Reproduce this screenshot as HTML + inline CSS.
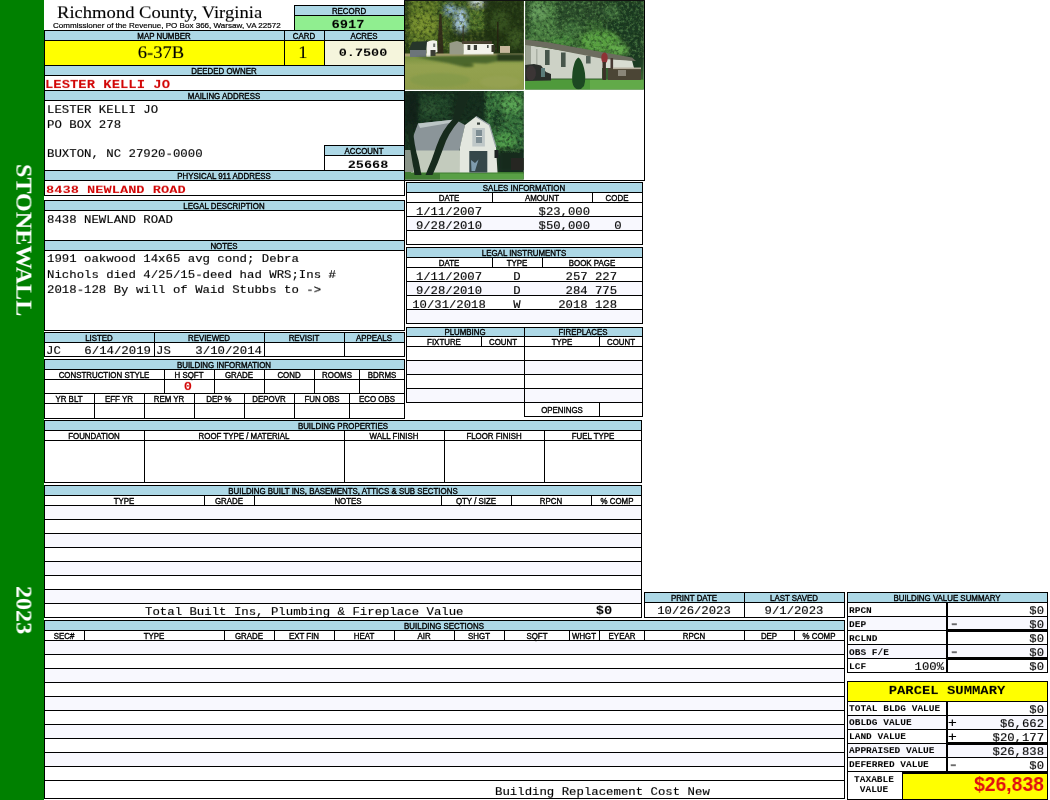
<!DOCTYPE html>
<html lang="en"><head><meta charset="utf-8"><title>Richmond County, Virginia - Property Record 6917</title><style>
html,body{margin:0;padding:0;background:#fff;}
body{width:1050px;height:800px;overflow:hidden;position:relative;}
#pg{position:absolute;left:0;top:0;width:1050px;height:800px;overflow:hidden;background:#fff;}
.f,.l,.t{position:absolute;}
.t{line-height:1;white-space:pre;color:#000;will-change:transform;}
.s{font-family:"Liberation Sans",Arial,sans-serif;-webkit-text-stroke:0.35px #000;}
.m{font-family:"Liberation Mono","Courier New",monospace;-webkit-text-stroke:0.15px currentColor;}
.r{font-family:"Liberation Serif","Times New Roman",serif;}
svg{position:absolute;display:block;}
</style></head><body><div id="pg">
<div class="f" style="left:0px;top:0px;width:44px;height:800px;background:#008000"></div>
<div class="t r" style="left:11.6px;top:164.4px;font-size:23.4px;color:#fff;font-weight:bold;transform-origin:0 100%;transform:translateY(-23.4px) rotate(90deg) scaleX(1.03);" id="sw">STONEWALL</div>
<div class="t r" style="left:11.8px;top:586.2px;font-size:23.4px;color:#fff;font-weight:bold;transform-origin:0 100%;transform:translateY(-23.4px) rotate(90deg) scaleX(1.03);" id="yr">2023</div>
<div class="t r" style="top:2.72px;font-size:18.6px;left:57.00px;transform:scale(1,0.9);transform-origin:left 15.58px;-webkit-text-stroke:0.12px #000;">Richmond County, Virginia</div>
<div class="t s" style="top:21.69px;font-size:8.05px;left:52.60px;-webkit-text-stroke:0.2px #000;">Commissioner of the Revenue, PO Box 366, Warsaw, VA 22572</div>
<div class="f" style="left:295px;top:6px;width:109px;height:9px;background:#add8e6"></div>
<div class="f" style="left:295px;top:16px;width:109px;height:14px;background:#90ee90"></div>
<div class="l" style="left:294px;top:5px;width:111px;height:1px;background:#000"></div>
<div class="l" style="left:294px;top:30px;width:111px;height:1px;background:#000"></div>
<div class="l" style="left:294px;top:5px;width:1px;height:26px;background:#000"></div>
<div class="l" style="left:404px;top:5px;width:1px;height:26px;background:#000"></div>
<div class="l" style="left:294px;top:15px;width:111px;height:1px;background:#000"></div>
<div class="t s" style="top:8.21px;font-size:7.9px;left:49.00px;width:600px;text-align:center;transform:scale(1,1.06);transform-origin:center 6.69px;">RECORD</div>
<div class="t m" style="top:17.62px;font-size:13.8px;left:48.40px;width:600px;text-align:center;font-weight:bold;transform:scale(1,0.83);transform-origin:center 10.58px;-webkit-text-stroke:0;">6917</div>
<div class="f" style="left:45px;top:31px;width:359px;height:9px;background:#add8e6"></div>
<div class="f" style="left:45px;top:41px;width:279px;height:24px;background:#ffff00"></div>
<div class="f" style="left:325px;top:41px;width:79px;height:24px;background:#f5f5dc"></div>
<div class="l" style="left:44px;top:30px;width:361px;height:1px;background:#000"></div>
<div class="l" style="left:44px;top:65px;width:361px;height:1px;background:#000"></div>
<div class="l" style="left:44px;top:30px;width:1px;height:36px;background:#000"></div>
<div class="l" style="left:404px;top:30px;width:1px;height:36px;background:#000"></div>
<div class="l" style="left:44px;top:40px;width:361px;height:1px;background:#000"></div>
<div class="l" style="left:284px;top:30px;width:1px;height:36px;background:#000"></div>
<div class="l" style="left:324px;top:30px;width:1px;height:36px;background:#000"></div>
<div class="t s" style="top:32.81px;font-size:7.9px;left:-136.00px;width:600px;text-align:center;transform:scale(1,1.06);transform-origin:center 6.69px;">MAP NUMBER</div>
<div class="t s" style="top:32.81px;font-size:7.9px;left:4.00px;width:600px;text-align:center;transform:scale(1,1.06);transform-origin:center 6.69px;">CARD</div>
<div class="t s" style="top:32.81px;font-size:7.9px;left:64.00px;width:600px;text-align:center;transform:scale(1,1.06);transform-origin:center 6.69px;">ACRES</div>
<div class="t r" style="top:42.62px;font-size:18.6px;left:-139.30px;width:600px;text-align:center;transform:scale(1,0.9);transform-origin:center 15.58px;-webkit-text-stroke:0.12px #000;">6-37B</div>
<div class="t r" style="top:42.62px;font-size:18.6px;left:2.60px;width:600px;text-align:center;transform:scale(1,0.9);transform-origin:center 15.58px;-webkit-text-stroke:0.12px #000;">1</div>
<div class="t m" style="top:46.05px;font-size:13.5px;left:62.50px;width:600px;text-align:center;font-weight:bold;transform:scale(1,0.83);transform-origin:center 10.35px;-webkit-text-stroke:0;">0.7500</div>
<div class="f" style="left:45px;top:66px;width:359px;height:9px;background:#add8e6"></div>
<div class="l" style="left:44px;top:65px;width:1px;height:131px;background:#000"></div>
<div class="l" style="left:404px;top:0px;width:1px;height:196px;background:#000"></div>
<div class="l" style="left:44px;top:75px;width:361px;height:1px;background:#000"></div>
<div class="l" style="left:44px;top:90px;width:361px;height:1px;background:#000"></div>
<div class="t s" style="top:67.91px;font-size:7.9px;left:-76.00px;width:600px;text-align:center;transform:scale(1,1.06);transform-origin:center 6.69px;">DEEDED OWNER</div>
<div class="t m" style="top:78.15px;font-size:13.9px;left:45.30px;font-weight:bold;color:#d20606;transform:scale(1,0.83);transform-origin:left 10.65px;-webkit-text-stroke:0;">LESTER KELLI JO</div>
<div class="f" style="left:45px;top:91px;width:359px;height:9px;background:#add8e6"></div>
<div class="l" style="left:44px;top:100px;width:361px;height:1px;background:#000"></div>
<div class="t s" style="top:92.91px;font-size:7.9px;left:-76.00px;width:600px;text-align:center;transform:scale(1,1.06);transform-origin:center 6.69px;">MAILING ADDRESS</div>
<div class="t m" style="top:103.53px;font-size:12.35px;left:47.00px;transform:scale(1,0.875);transform-origin:left 9.47px;">LESTER KELLI JO</div>
<div class="t m" style="top:118.73px;font-size:12.35px;left:47.00px;transform:scale(1,0.875);transform-origin:left 9.47px;">PO BOX 278</div>
<div class="t m" style="top:148.43px;font-size:12.35px;left:46.60px;transform:scale(1,0.875);transform-origin:left 9.47px;">BUXTON, NC 27920-0000</div>
<div class="f" style="left:325px;top:146px;width:79px;height:9px;background:#add8e6"></div>
<div class="l" style="left:324px;top:145px;width:81px;height:1px;background:#000"></div>
<div class="l" style="left:324px;top:145px;width:1px;height:26px;background:#000"></div>
<div class="l" style="left:324px;top:155px;width:81px;height:1px;background:#000"></div>
<div class="t s" style="top:148.21px;font-size:7.9px;left:64.00px;width:600px;text-align:center;transform:scale(1,1.06);transform-origin:center 6.69px;">ACCOUNT</div>
<div class="t m" style="top:158.05px;font-size:13.5px;left:67.80px;width:600px;text-align:center;font-weight:bold;transform:scale(1,0.83);transform-origin:center 10.35px;-webkit-text-stroke:0;">25668</div>
<div class="f" style="left:45px;top:171px;width:359px;height:9px;background:#add8e6"></div>
<div class="l" style="left:44px;top:170px;width:361px;height:1px;background:#000"></div>
<div class="l" style="left:44px;top:180px;width:361px;height:1px;background:#000"></div>
<div class="l" style="left:44px;top:195px;width:361px;height:1px;background:#000"></div>
<div class="t s" style="top:172.91px;font-size:7.9px;left:-76.00px;width:600px;text-align:center;transform:scale(1,1.06);transform-origin:center 6.69px;">PHYSICAL 911 ADDRESS</div>
<div class="t m" style="top:182.50px;font-size:13.7px;left:46.30px;font-weight:bold;color:#d20606;transform:scale(1,0.83);transform-origin:left 10.50px;-webkit-text-stroke:0;">8438 NEWLAND ROAD</div>
<div class="f" style="left:45px;top:201px;width:359px;height:9px;background:#add8e6"></div>
<div class="l" style="left:44px;top:200px;width:361px;height:1px;background:#000"></div>
<div class="l" style="left:44px;top:240px;width:361px;height:1px;background:#000"></div>
<div class="l" style="left:44px;top:200px;width:1px;height:41px;background:#000"></div>
<div class="l" style="left:404px;top:200px;width:1px;height:41px;background:#000"></div>
<div class="l" style="left:44px;top:210px;width:361px;height:1px;background:#000"></div>
<div class="t s" style="top:203.01px;font-size:7.9px;left:-76.00px;width:600px;text-align:center;transform:scale(1,1.06);transform-origin:center 6.69px;">LEGAL DESCRIPTION</div>
<div class="t m" style="top:213.73px;font-size:12.35px;left:47.00px;transform:scale(1,0.875);transform-origin:left 9.47px;">8438 NEWLAND ROAD</div>
<div class="f" style="left:45px;top:241px;width:359px;height:9px;background:#add8e6"></div>
<div class="l" style="left:44px;top:240px;width:361px;height:1px;background:#000"></div>
<div class="l" style="left:44px;top:330px;width:361px;height:1px;background:#000"></div>
<div class="l" style="left:44px;top:240px;width:1px;height:91px;background:#000"></div>
<div class="l" style="left:404px;top:240px;width:1px;height:91px;background:#000"></div>
<div class="l" style="left:44px;top:250px;width:361px;height:1px;background:#000"></div>
<div class="t s" style="top:243.01px;font-size:7.9px;left:-76.00px;width:600px;text-align:center;transform:scale(1,1.06);transform-origin:center 6.69px;">NOTES</div>
<div class="t m" style="top:253.33px;font-size:12.35px;left:46.80px;transform:scale(1,0.875);transform-origin:left 9.47px;">1991 oakwood 14x65 avg cond; Debra</div>
<div class="t m" style="top:269.13px;font-size:12.35px;left:46.80px;transform:scale(1,0.875);transform-origin:left 9.47px;">Nichols died 4/25/15-deed had WRS;Ins #</div>
<div class="t m" style="top:284.13px;font-size:12.35px;left:46.80px;transform:scale(1,0.875);transform-origin:left 9.47px;">2018-128 By will of Waid Stubbs to -&gt;</div>
<div class="f" style="left:45px;top:333px;width:359px;height:9px;background:#add8e6"></div>
<div class="l" style="left:44px;top:332px;width:361px;height:1px;background:#000"></div>
<div class="l" style="left:44px;top:356px;width:361px;height:1px;background:#000"></div>
<div class="l" style="left:44px;top:332px;width:1px;height:25px;background:#000"></div>
<div class="l" style="left:404px;top:332px;width:1px;height:25px;background:#000"></div>
<div class="l" style="left:44px;top:342px;width:361px;height:1px;background:#000"></div>
<div class="l" style="left:154px;top:332px;width:1px;height:25px;background:#000"></div>
<div class="l" style="left:264px;top:332px;width:1px;height:25px;background:#000"></div>
<div class="l" style="left:344px;top:332px;width:1px;height:25px;background:#000"></div>
<div class="t s" style="top:335.01px;font-size:7.9px;left:-201.00px;width:600px;text-align:center;transform:scale(1,1.06);transform-origin:center 6.69px;">LISTED</div>
<div class="t s" style="top:335.01px;font-size:7.9px;left:-91.00px;width:600px;text-align:center;transform:scale(1,1.06);transform-origin:center 6.69px;">REVIEWED</div>
<div class="t s" style="top:335.01px;font-size:7.9px;left:4.00px;width:600px;text-align:center;transform:scale(1,1.06);transform-origin:center 6.69px;">REVISIT</div>
<div class="t s" style="top:335.01px;font-size:7.9px;left:74.00px;width:600px;text-align:center;transform:scale(1,1.06);transform-origin:center 6.69px;">APPEALS</div>
<div class="t m" style="top:344.73px;font-size:12.35px;left:46.00px;transform:scale(1,0.875);transform-origin:left 9.47px;">JC</div>
<div class="t m" style="top:344.73px;font-size:12.35px;left:-448.60px;width:600px;text-align:right;transform:scale(1,0.875);transform-origin:right 9.47px;">6/14/2019</div>
<div class="t m" style="top:344.73px;font-size:12.35px;left:156.00px;transform:scale(1,0.875);transform-origin:left 9.47px;">JS</div>
<div class="t m" style="top:344.73px;font-size:12.35px;left:-338.40px;width:600px;text-align:right;transform:scale(1,0.875);transform-origin:right 9.47px;">3/10/2014</div>
<div class="f" style="left:45px;top:360px;width:359px;height:9px;background:#add8e6"></div>
<div class="l" style="left:44px;top:359px;width:361px;height:1px;background:#000"></div>
<div class="l" style="left:44px;top:418px;width:361px;height:1px;background:#000"></div>
<div class="l" style="left:44px;top:359px;width:1px;height:60px;background:#000"></div>
<div class="l" style="left:404px;top:359px;width:1px;height:60px;background:#000"></div>
<div class="l" style="left:44px;top:369px;width:361px;height:1px;background:#000"></div>
<div class="l" style="left:44px;top:379px;width:361px;height:1px;background:#000"></div>
<div class="l" style="left:44px;top:393px;width:361px;height:1px;background:#000"></div>
<div class="l" style="left:44px;top:403px;width:361px;height:1px;background:#000"></div>
<div class="l" style="left:164px;top:369px;width:1px;height:25px;background:#000"></div>
<div class="l" style="left:214px;top:369px;width:1px;height:25px;background:#000"></div>
<div class="l" style="left:264px;top:369px;width:1px;height:25px;background:#000"></div>
<div class="l" style="left:314px;top:369px;width:1px;height:25px;background:#000"></div>
<div class="l" style="left:359px;top:369px;width:1px;height:25px;background:#000"></div>
<div class="l" style="left:94px;top:393px;width:1px;height:26px;background:#000"></div>
<div class="l" style="left:144px;top:393px;width:1px;height:26px;background:#000"></div>
<div class="l" style="left:194px;top:393px;width:1px;height:26px;background:#000"></div>
<div class="l" style="left:244px;top:393px;width:1px;height:26px;background:#000"></div>
<div class="l" style="left:294px;top:393px;width:1px;height:26px;background:#000"></div>
<div class="l" style="left:349px;top:393px;width:1px;height:26px;background:#000"></div>
<div class="t s" style="top:362.01px;font-size:7.9px;left:-76.00px;width:600px;text-align:center;transform:scale(1,1.06);transform-origin:center 6.69px;">BUILDING INFORMATION</div>
<div class="t s" style="top:372.01px;font-size:7.9px;left:-196.00px;width:600px;text-align:center;transform:scale(1,1.06);transform-origin:center 6.69px;">CONSTRUCTION STYLE</div>
<div class="t s" style="top:372.01px;font-size:7.9px;left:-111.00px;width:600px;text-align:center;transform:scale(1,1.06);transform-origin:center 6.69px;">H SQFT</div>
<div class="t s" style="top:372.01px;font-size:7.9px;left:-61.00px;width:600px;text-align:center;transform:scale(1,1.06);transform-origin:center 6.69px;">GRADE</div>
<div class="t s" style="top:372.01px;font-size:7.9px;left:-11.00px;width:600px;text-align:center;transform:scale(1,1.06);transform-origin:center 6.69px;">COND</div>
<div class="t s" style="top:372.01px;font-size:7.9px;left:36.50px;width:600px;text-align:center;transform:scale(1,1.06);transform-origin:center 6.69px;">ROOMS</div>
<div class="t s" style="top:372.01px;font-size:7.9px;left:81.50px;width:600px;text-align:center;transform:scale(1,1.06);transform-origin:center 6.69px;">BDRMS</div>
<div class="t m" style="top:380.22px;font-size:13.8px;left:-112.00px;width:600px;text-align:center;font-weight:bold;color:#d20606;transform:scale(1,0.83);transform-origin:center 10.58px;-webkit-text-stroke:0;">0</div>
<div class="t s" style="top:396.01px;font-size:7.9px;left:-231.00px;width:600px;text-align:center;transform:scale(1,1.06);transform-origin:center 6.69px;">YR BLT</div>
<div class="t s" style="top:396.01px;font-size:7.9px;left:-181.00px;width:600px;text-align:center;transform:scale(1,1.06);transform-origin:center 6.69px;">EFF YR</div>
<div class="t s" style="top:396.01px;font-size:7.9px;left:-131.00px;width:600px;text-align:center;transform:scale(1,1.06);transform-origin:center 6.69px;">REM YR</div>
<div class="t s" style="top:396.01px;font-size:7.9px;left:-81.00px;width:600px;text-align:center;transform:scale(1,1.06);transform-origin:center 6.69px;">DEP %</div>
<div class="t s" style="top:396.01px;font-size:7.9px;left:-31.00px;width:600px;text-align:center;transform:scale(1,1.06);transform-origin:center 6.69px;">DEPOVR</div>
<div class="t s" style="top:396.01px;font-size:7.9px;left:21.50px;width:600px;text-align:center;transform:scale(1,1.06);transform-origin:center 6.69px;">FUN OBS</div>
<div class="t s" style="top:396.01px;font-size:7.9px;left:76.50px;width:600px;text-align:center;transform:scale(1,1.06);transform-origin:center 6.69px;">ECO OBS</div>
<div class="f" style="left:45px;top:421px;width:596px;height:9px;background:#add8e6"></div>
<div class="l" style="left:44px;top:420px;width:598px;height:1px;background:#000"></div>
<div class="l" style="left:44px;top:482px;width:598px;height:1px;background:#000"></div>
<div class="l" style="left:44px;top:420px;width:1px;height:63px;background:#000"></div>
<div class="l" style="left:641px;top:420px;width:1px;height:63px;background:#000"></div>
<div class="l" style="left:44px;top:430px;width:598px;height:1px;background:#000"></div>
<div class="l" style="left:44px;top:440px;width:598px;height:1px;background:#000"></div>
<div class="l" style="left:144px;top:430px;width:1px;height:53px;background:#000"></div>
<div class="l" style="left:344px;top:430px;width:1px;height:53px;background:#000"></div>
<div class="l" style="left:444px;top:430px;width:1px;height:53px;background:#000"></div>
<div class="l" style="left:544px;top:430px;width:1px;height:53px;background:#000"></div>
<div class="t s" style="top:423.01px;font-size:7.9px;left:43.00px;width:600px;text-align:center;transform:scale(1,1.06);transform-origin:center 6.69px;">BUILDING PROPERTIES</div>
<div class="t s" style="top:433.01px;font-size:7.9px;left:-206.00px;width:600px;text-align:center;transform:scale(1,1.06);transform-origin:center 6.69px;">FOUNDATION</div>
<div class="t s" style="top:433.01px;font-size:7.9px;left:-56.00px;width:600px;text-align:center;transform:scale(1,1.06);transform-origin:center 6.69px;">ROOF TYPE / MATERIAL</div>
<div class="t s" style="top:433.01px;font-size:7.9px;left:94.00px;width:600px;text-align:center;transform:scale(1,1.06);transform-origin:center 6.69px;">WALL FINISH</div>
<div class="t s" style="top:433.01px;font-size:7.9px;left:194.00px;width:600px;text-align:center;transform:scale(1,1.06);transform-origin:center 6.69px;">FLOOR FINISH</div>
<div class="t s" style="top:433.01px;font-size:7.9px;left:293.00px;width:600px;text-align:center;transform:scale(1,1.06);transform-origin:center 6.69px;">FUEL TYPE</div>
<div class="f" style="left:45px;top:486px;width:596px;height:9px;background:#add8e6"></div>
<div class="f" style="left:45px;top:506px;width:596px;height:13px;background:#f8f8fe"></div>
<div class="f" style="left:45px;top:534px;width:596px;height:13px;background:#f8f8fe"></div>
<div class="f" style="left:45px;top:562px;width:596px;height:13px;background:#f8f8fe"></div>
<div class="f" style="left:45px;top:590px;width:596px;height:13px;background:#f8f8fe"></div>
<div class="l" style="left:44px;top:485px;width:598px;height:1px;background:#000"></div>
<div class="l" style="left:44px;top:617px;width:598px;height:1px;background:#000"></div>
<div class="l" style="left:44px;top:485px;width:1px;height:133px;background:#000"></div>
<div class="l" style="left:641px;top:485px;width:1px;height:133px;background:#000"></div>
<div class="l" style="left:44px;top:495px;width:598px;height:1px;background:#000"></div>
<div class="l" style="left:44px;top:505px;width:598px;height:1px;background:#000"></div>
<div class="l" style="left:44px;top:519px;width:598px;height:1px;background:#000"></div>
<div class="l" style="left:44px;top:533px;width:598px;height:1px;background:#000"></div>
<div class="l" style="left:44px;top:547px;width:598px;height:1px;background:#000"></div>
<div class="l" style="left:44px;top:561px;width:598px;height:1px;background:#000"></div>
<div class="l" style="left:44px;top:575px;width:598px;height:1px;background:#000"></div>
<div class="l" style="left:44px;top:589px;width:598px;height:1px;background:#000"></div>
<div class="l" style="left:44px;top:603px;width:598px;height:1px;background:#000"></div>
<div class="l" style="left:204px;top:495px;width:1px;height:11px;background:#000"></div>
<div class="l" style="left:254px;top:495px;width:1px;height:11px;background:#000"></div>
<div class="l" style="left:441px;top:495px;width:1px;height:11px;background:#000"></div>
<div class="l" style="left:511px;top:495px;width:1px;height:11px;background:#000"></div>
<div class="l" style="left:591px;top:495px;width:1px;height:11px;background:#000"></div>
<div class="t s" style="top:488.01px;font-size:7.9px;left:43.00px;width:600px;text-align:center;transform:scale(1,1.06);transform-origin:center 6.69px;">BUILDING BUILT INS, BASEMENTS, ATTICS &amp; SUB SECTIONS</div>
<div class="t s" style="top:498.01px;font-size:7.9px;left:-176.00px;width:600px;text-align:center;transform:scale(1,1.06);transform-origin:center 6.69px;">TYPE</div>
<div class="t s" style="top:498.01px;font-size:7.9px;left:-71.00px;width:600px;text-align:center;transform:scale(1,1.06);transform-origin:center 6.69px;">GRADE</div>
<div class="t s" style="top:498.01px;font-size:7.9px;left:47.50px;width:600px;text-align:center;transform:scale(1,1.06);transform-origin:center 6.69px;">NOTES</div>
<div class="t s" style="top:498.01px;font-size:7.9px;left:176.00px;width:600px;text-align:center;transform:scale(1,1.06);transform-origin:center 6.69px;">QTY / SIZE</div>
<div class="t s" style="top:498.01px;font-size:7.9px;left:251.00px;width:600px;text-align:center;transform:scale(1,1.06);transform-origin:center 6.69px;">RPCN</div>
<div class="t s" style="top:498.01px;font-size:7.9px;left:316.50px;width:600px;text-align:center;transform:scale(1,1.06);transform-origin:center 6.69px;">% COMP</div>
<div class="t m" style="top:605.73px;font-size:12.35px;left:145.30px;transform:scale(1,0.875);transform-origin:left 9.47px;">Total Built Ins, Plumbing &amp; Fireplace Value</div>
<div class="t m" style="top:604.02px;font-size:13.8px;left:303.50px;width:600px;text-align:center;font-weight:bold;transform:scale(1,0.83);transform-origin:center 10.58px;-webkit-text-stroke:0;">$0</div>
<div class="f" style="left:45px;top:621px;width:799px;height:9px;background:#add8e6"></div>
<div class="f" style="left:45px;top:641px;width:799px;height:13px;background:#f8f8fe"></div>
<div class="f" style="left:45px;top:669px;width:799px;height:13px;background:#f8f8fe"></div>
<div class="f" style="left:45px;top:697px;width:799px;height:13px;background:#f8f8fe"></div>
<div class="f" style="left:45px;top:725px;width:799px;height:13px;background:#f8f8fe"></div>
<div class="f" style="left:45px;top:753px;width:799px;height:13px;background:#f8f8fe"></div>
<div class="l" style="left:44px;top:620px;width:801px;height:1px;background:#000"></div>
<div class="l" style="left:44px;top:798px;width:801px;height:1px;background:#000"></div>
<div class="l" style="left:44px;top:620px;width:1px;height:179px;background:#000"></div>
<div class="l" style="left:844px;top:620px;width:1px;height:179px;background:#000"></div>
<div class="l" style="left:44px;top:630px;width:801px;height:1px;background:#000"></div>
<div class="l" style="left:44px;top:640px;width:801px;height:1px;background:#000"></div>
<div class="l" style="left:44px;top:654px;width:801px;height:1px;background:#000"></div>
<div class="l" style="left:44px;top:668px;width:801px;height:1px;background:#000"></div>
<div class="l" style="left:44px;top:682px;width:801px;height:1px;background:#000"></div>
<div class="l" style="left:44px;top:696px;width:801px;height:1px;background:#000"></div>
<div class="l" style="left:44px;top:710px;width:801px;height:1px;background:#000"></div>
<div class="l" style="left:44px;top:724px;width:801px;height:1px;background:#000"></div>
<div class="l" style="left:44px;top:738px;width:801px;height:1px;background:#000"></div>
<div class="l" style="left:44px;top:752px;width:801px;height:1px;background:#000"></div>
<div class="l" style="left:44px;top:766px;width:801px;height:1px;background:#000"></div>
<div class="l" style="left:44px;top:780px;width:801px;height:1px;background:#000"></div>
<div class="l" style="left:84px;top:630px;width:1px;height:11px;background:#000"></div>
<div class="l" style="left:224px;top:630px;width:1px;height:11px;background:#000"></div>
<div class="l" style="left:274px;top:630px;width:1px;height:11px;background:#000"></div>
<div class="l" style="left:334px;top:630px;width:1px;height:11px;background:#000"></div>
<div class="l" style="left:394px;top:630px;width:1px;height:11px;background:#000"></div>
<div class="l" style="left:454px;top:630px;width:1px;height:11px;background:#000"></div>
<div class="l" style="left:504px;top:630px;width:1px;height:11px;background:#000"></div>
<div class="l" style="left:569px;top:630px;width:1px;height:11px;background:#000"></div>
<div class="l" style="left:599px;top:630px;width:1px;height:11px;background:#000"></div>
<div class="l" style="left:644px;top:630px;width:1px;height:11px;background:#000"></div>
<div class="l" style="left:744px;top:630px;width:1px;height:11px;background:#000"></div>
<div class="l" style="left:794px;top:630px;width:1px;height:11px;background:#000"></div>
<div class="t s" style="top:623.01px;font-size:7.9px;left:144.00px;width:600px;text-align:center;transform:scale(1,1.06);transform-origin:center 6.69px;">BUILDING SECTIONS</div>
<div class="t s" style="top:633.01px;font-size:7.9px;left:-236.00px;width:600px;text-align:center;transform:scale(1,1.06);transform-origin:center 6.69px;">SEC#</div>
<div class="t s" style="top:633.01px;font-size:7.9px;left:-146.00px;width:600px;text-align:center;transform:scale(1,1.06);transform-origin:center 6.69px;">TYPE</div>
<div class="t s" style="top:633.01px;font-size:7.9px;left:-51.00px;width:600px;text-align:center;transform:scale(1,1.06);transform-origin:center 6.69px;">GRADE</div>
<div class="t s" style="top:633.01px;font-size:7.9px;left:4.00px;width:600px;text-align:center;transform:scale(1,1.06);transform-origin:center 6.69px;">EXT FIN</div>
<div class="t s" style="top:633.01px;font-size:7.9px;left:64.00px;width:600px;text-align:center;transform:scale(1,1.06);transform-origin:center 6.69px;">HEAT</div>
<div class="t s" style="top:633.01px;font-size:7.9px;left:124.00px;width:600px;text-align:center;transform:scale(1,1.06);transform-origin:center 6.69px;">AIR</div>
<div class="t s" style="top:633.01px;font-size:7.9px;left:179.00px;width:600px;text-align:center;transform:scale(1,1.06);transform-origin:center 6.69px;">SHGT</div>
<div class="t s" style="top:633.01px;font-size:7.9px;left:236.50px;width:600px;text-align:center;transform:scale(1,1.06);transform-origin:center 6.69px;">SQFT</div>
<div class="t s" style="top:633.01px;font-size:7.9px;left:284.00px;width:600px;text-align:center;transform:scale(1,1.06);transform-origin:center 6.69px;">WHGT</div>
<div class="t s" style="top:633.01px;font-size:7.9px;left:321.50px;width:600px;text-align:center;transform:scale(1,1.06);transform-origin:center 6.69px;">EYEAR</div>
<div class="t s" style="top:633.01px;font-size:7.9px;left:394.00px;width:600px;text-align:center;transform:scale(1,1.06);transform-origin:center 6.69px;">RPCN</div>
<div class="t s" style="top:633.01px;font-size:7.9px;left:469.00px;width:600px;text-align:center;transform:scale(1,1.06);transform-origin:center 6.69px;">DEP</div>
<div class="t s" style="top:633.01px;font-size:7.9px;left:519.00px;width:600px;text-align:center;transform:scale(1,1.06);transform-origin:center 6.69px;">% COMP</div>
<div class="t m" style="top:785.73px;font-size:12.35px;left:495.20px;transform:scale(1,0.875);transform-origin:left 9.47px;">Building Replacement Cost New</div>
<svg style="left:405px;top:0px" width="239" height="180" viewBox="405 0 239 180">
<defs>
<filter id="b1" x="-5%" y="-5%" width="110%" height="110%"><feGaussianBlur stdDeviation="0.7"/></filter>
<filter id="b2" x="-20%" y="-20%" width="140%" height="140%"><feGaussianBlur stdDeviation="2.2"/></filter>
<filter id="b3" x="-20%" y="-20%" width="140%" height="140%"><feGaussianBlur stdDeviation="1.2"/></filter>
<filter id="leaf" x="0" y="0" width="100%" height="100%">
<feTurbulence type="fractalNoise" baseFrequency="0.3" numOctaves="3" seed="7" result="n"/>
<feColorMatrix in="n" type="matrix" values="0 0 0 0 0  0 0 0 0 0  0 0 0 0 0  2.6 0 0 0 -1.1" result="a"/>
<feComposite in="SourceGraphic" in2="a" operator="in"/>
</filter>
<filter id="leaf2" x="0" y="0" width="100%" height="100%">
<feTurbulence type="fractalNoise" baseFrequency="0.34" numOctaves="3" seed="23" result="n"/>
<feColorMatrix in="n" type="matrix" values="0 0 0 0 0  0 0 0 0 0  0 0 0 0 0  0 2.8 0 0 -1.25" result="a"/>
<feComposite in="SourceGraphic" in2="a" operator="in"/>
</filter>
<clipPath id="c1"><rect x="405" y="1" width="118.8" height="88.4"/></clipPath>
<clipPath id="c2"><rect x="525.2" y="1" width="118.6" height="88.4"/></clipPath>
<clipPath id="c3"><rect x="405" y="91.1" width="118.7" height="88.5"/></clipPath>
<linearGradient id="lawn1" x1="0" y1="0" x2="0" y2="1"><stop offset="0" stop-color="#76903e"/><stop offset="0.3" stop-color="#94a250"/><stop offset="1" stop-color="#8e9c4a"/></linearGradient>
</defs>
<g clip-path="url(#c1)">
<rect x="405" y="0" width="119" height="90" fill="#36501e"/>
<g filter="url(#b2)">
<rect x="405" y="0" width="32" height="44" fill="#5a7626"/>
<rect x="405" y="0" width="5" height="60" fill="#2c4018"/>
<ellipse cx="424" cy="24" rx="14" ry="12" fill="#748e2e"/>
<rect x="438" y="0" width="30" height="45" fill="#405e26"/>
<ellipse cx="461" cy="22" rx="6" ry="13" fill="#a9c9e6"/>
<ellipse cx="450" cy="10" rx="5" ry="5" fill="#8fb4d8"/>
<ellipse cx="477" cy="3" rx="7" ry="3.5" fill="#dfeaf6"/>
<rect x="466" y="8" width="18" height="36" fill="#4a6c2a"/>
<rect x="484" y="0" width="40" height="56" fill="#263a18"/>
<ellipse cx="500" cy="22" rx="9" ry="12" fill="#3f5e26"/>
<ellipse cx="515" cy="38" rx="7" ry="9" fill="#4a6a2c"/>
<rect x="452" y="32" width="36" height="10" fill="#2a401c"/>
</g>
<rect x="405" y="0" width="119" height="56" fill="#1c2c10" filter="url(#leaf)" opacity="0.75"/>
<rect x="405" y="0" width="80" height="50" fill="#8ea43e" filter="url(#leaf2)" opacity="0.5"/>
<rect x="485" y="0" width="39" height="50" fill="#5a7a36" filter="url(#leaf2)" opacity="0.4"/>
<rect x="484" y="0" width="40" height="56" fill="#1a2a10" opacity="0.3"/>
<rect x="444" y="30" width="60" height="12" fill="#1a2a10" opacity="0.35" filter="url(#b3)"/>
<g filter="url(#b1)">
<path d="M439.4 14 L441.4 14 L443.5 54 L437.4 54 Z" fill="#2e2416" opacity="0.85"/>
<rect x="462.5" y="26" width="1.3" height="16" fill="#33301e" opacity="0.8"/>
<rect x="497" y="22" width="1.6" height="30" fill="#241f14" opacity="0.8"/>
<rect x="405" y="55" width="119" height="35" fill="url(#lawn1)"/>
<rect x="405" y="53.5" width="119" height="3" fill="#a8a070"/>
<path d="M412 42 L428 41 L426 50 L409 50 Z" fill="#28362c"/>
<rect x="410" y="50" width="16" height="7" fill="#6c747a"/>
<path d="M427 42 Q432 39 437 41 L437.5 52 L434 53 L430 57 L426.5 57 L426.5 48 Z" fill="#f2f2ea"/>
<rect x="430.5" y="50" width="5" height="6" fill="#3a3c34"/>
<rect x="433.2" y="43.5" width="2" height="3.5" fill="#6a7068"/>
<path d="M449.5 43 L457 41 L463.5 43 L463.5 54.5 L449.5 54.5 Z" fill="#979a88"/>
<rect x="463.5" y="44" width="30" height="10.5" fill="#f4f4ec"/>
<rect x="462" y="41.2" width="30" height="2.6" fill="#4e4234"/>
<rect x="467.5" y="45" width="2.8" height="5" fill="#3c4038"/>
<rect x="473.8" y="45" width="3.2" height="5" fill="#3c4038"/>
<rect x="487" y="45" width="1.6" height="3" fill="#4a4e46"/>
<rect x="491.5" y="45" width="3.5" height="7" fill="#343428"/>
<rect x="500" y="46" width="10" height="7" fill="#c6b69c"/>
</g>
<g filter="url(#b3)">
<path d="M416 57 L524 54.5 L524 61 L498 61 L486 63.5 L474 63 L462 66.5 L448 63 L428 59.5 Z" fill="#46622a" opacity="0.9"/>
<rect x="497" y="54" width="27" height="7" fill="#2c3e1c"/>
<ellipse cx="468" cy="65.5" rx="6" ry="1.6" fill="#4a6428"/>
<ellipse cx="440" cy="80" rx="30" ry="7" fill="#80984a" opacity="0.6"/>
<ellipse cx="500" cy="82" rx="20" ry="6" fill="#98a456" opacity="0.6"/>
</g>
</g>
<g clip-path="url(#c2)">
<rect x="525" y="0" width="120" height="90" fill="#35602f"/>
<g filter="url(#b2)">
<rect x="525" y="0" width="36" height="40" fill="#4c7e42"/>
<ellipse cx="538" cy="12" rx="10" ry="9" fill="#63985a"/>
<rect x="525" y="0" width="5" height="36" fill="#243c22"/>
<rect x="556" y="0" width="30" height="30" fill="#2c4c2c"/>
<ellipse cx="572" cy="30" rx="10" ry="8" fill="#40703a"/>
<rect x="586" y="0" width="20" height="20" fill="#2a4a2c"/>
<rect x="604" y="0" width="40" height="62" fill="#1f3a24"/>
<ellipse cx="612" cy="12" rx="8" ry="7" fill="#3c6a3a"/>
<ellipse cx="600" cy="42" rx="20" ry="11" fill="#58a040"/>
<ellipse cx="618" cy="50" rx="10" ry="6" fill="#62aa48"/>
<ellipse cx="562" cy="42" rx="12" ry="6" fill="#4a8a3c"/>
<ellipse cx="636" cy="60" rx="8" ry="14" fill="#1f3a22"/>
</g>
<rect x="525" y="0" width="120" height="60" fill="#16301a" filter="url(#leaf)" opacity="0.7"/>
<rect x="525" y="0" width="120" height="58" fill="#7ab866" filter="url(#leaf2)" opacity="0.45"/>
<g filter="url(#b1)">
<rect x="525" y="79.5" width="120" height="11" fill="#4f9a3a"/>
<rect x="590" y="80" width="55" height="10" fill="#62aa4a"/>
<path d="M525 44 L531 45 L531 66 L525 66 Z" fill="#9aa092"/>
<path d="M531 45.5 L602 57 L602 78.5 L531 78.5 Z" fill="#cdd2c6"/>
<path d="M602 58 L632 60.5 L634 68 L602 68 Z" fill="#d9ddd2"/>
<path d="M525 39.5 L546 42 L632 57.5 L636 61 L604 59 L545 47.5 L525 45 Z" fill="#6c6c5e"/>
<rect x="545" y="50" width="4.6" height="15" fill="#47564c"/>
<rect x="561" y="52.5" width="4.6" height="14.5" fill="#47564c"/>
<rect x="586" y="56" width="4.6" height="7.5" fill="#55645a"/>
<rect x="536" y="49" width="1.5" height="18" fill="#aab0a4"/>
<path d="M525 65 L534 64 L541 65.5 L546 72 L551 74 L551 80.5 L525 81 Z" fill="#2a2e2a"/>
<ellipse cx="531" cy="73" rx="5" ry="7.5" fill="#3a3436"/>
<rect x="541" y="68" width="4" height="9" fill="#5a7a78"/>
<ellipse cx="604.5" cy="58" rx="3.2" ry="5.5" fill="#8e3236"/>
<rect x="602.5" y="62" width="3.4" height="18" fill="#3a3028"/>
<rect x="610.5" y="58" width="2.6" height="22" fill="#4a3a34"/>
<rect x="608" y="68" width="33" height="12" fill="#4c4434"/>
<rect x="613" y="67.5" width="28" height="1.6" fill="#b8b0a0"/>
<rect x="618" y="70" width="8" height="6" fill="#8a8678"/>
<path d="M578.5 57.5 Q582 60 584 68 Q586.5 78 584 86 Q581 90 578 89.5 Q573.5 89 572.3 82 Q571.5 72 574.5 63 Q576 58.5 578.5 57.5 Z" fill="#1e4a22"/>
</g>
</g>
<g clip-path="url(#c3)">
<rect x="405" y="91" width="119" height="89" fill="#1d3a24"/>
<g filter="url(#b2)">
<rect x="420" y="96" width="30" height="24" fill="#2c5630"/>
<rect x="486" y="91" width="38" height="62" fill="#34703a"/>
<ellipse cx="512" cy="104" rx="11" ry="9" fill="#58a252"/>
<ellipse cx="505" cy="141" rx="10" ry="8" fill="#4e9a48"/>
<ellipse cx="497" cy="120" rx="6" ry="10" fill="#1f4026"/>
<rect x="405" y="91" width="14" height="40" fill="#14281a"/>
<ellipse cx="430" cy="108" rx="8" ry="6" fill="#3a6a3c"/>
<rect x="498" y="148" width="26" height="25" fill="#182c1e"/>
</g>
<rect x="405" y="91" width="119" height="62" fill="#0e2014" filter="url(#leaf)" opacity="0.7"/>
<rect x="484" y="91" width="40" height="62" fill="#6ab060" filter="url(#leaf2)" opacity="0.45"/>
<rect x="418" y="94" width="36" height="26" fill="#4a8a4a" filter="url(#leaf2)" opacity="0.35"/>
<rect x="405" y="91" width="80" height="30" fill="#0c1c12" opacity="0.3" filter="url(#b3)"/>
<g filter="url(#b1)">
<rect x="405" y="172" width="119" height="9" fill="#3f7c32"/>
<rect x="440" y="173.5" width="84" height="7" fill="#58a044"/>
<path d="M418 123.5 L455 119.5 L465 125 L460 148 L459.5 151 L411 151 L413 137 Z" fill="#8b9599"/>
<path d="M418 123.5 L455 119.5 L458 121.5 L420 128 Z" fill="#bcc6c6"/>
<rect x="411" y="150.5" width="49" height="22" fill="#c3cbbd"/>
<rect x="405" y="150" width="8" height="22" fill="#8a9488"/>
<path d="M476 116.5 L489.5 125 L496 147 L497.5 172.5 L459.8 172.5 L460 147 L465 125 Z" fill="#e3e7df"/>
<path d="M476 116.5 L489.5 125 L496 147" fill="none" stroke="#9aa4a8" stroke-width="1.2"/>
<rect x="472.3" y="128" width="12.6" height="18.5" fill="#bfc8c8"/>
<rect x="476" y="130" width="6" height="13" fill="#7e8e94"/>
<rect x="476" y="136" width="6" height="1" fill="#e8ece8"/>
<rect x="469.3" y="151" width="18" height="21.5" fill="#34464a"/>
<path d="M471 160 L475 163 L478.5 159.5 L475 171 L471.5 171 Z" fill="#7e9cae"/>
<rect x="477" y="122.5" width="3" height="2.2" fill="#39423e"/>
<rect x="494.5" y="150" width="4" height="8" fill="#1c2420"/>
<rect x="511" y="158" width="13" height="12" fill="#262624"/>
<path d="M459 91 L470 91 Q466 108 459 121 Q448 133 443 149 Q438 163 432.5 175 L425.5 175 Q432 160 436.5 146 Q442 130 452.5 119.5 Q456 108 459 91 Z" fill="#182a1c"/>
<path d="M407 125 L412.5 124 Q414 146 418.5 160 L421.5 175 L414.5 175 Q410 150 407 125 Z" fill="#182a1c"/>
</g>
</g>
</svg>
<div class="l" style="left:404px;top:180px;width:241px;height:1px;background:#000"></div>
<div class="l" style="left:644px;top:0px;width:1px;height:181px;background:#000"></div>
<div class="l" style="left:404px;top:0px;width:241px;height:1px;background:#111"></div>
<div class="f" style="left:407px;top:183px;width:235px;height:9px;background:#add8e6"></div>
<div class="f" style="left:407px;top:217px;width:235px;height:13px;background:#f8f8fe"></div>
<div class="l" style="left:406px;top:182px;width:237px;height:1px;background:#000"></div>
<div class="l" style="left:406px;top:244px;width:237px;height:1px;background:#000"></div>
<div class="l" style="left:406px;top:182px;width:1px;height:63px;background:#000"></div>
<div class="l" style="left:642px;top:182px;width:1px;height:63px;background:#000"></div>
<div class="l" style="left:406px;top:192px;width:237px;height:1px;background:#000"></div>
<div class="l" style="left:406px;top:202px;width:237px;height:1px;background:#000"></div>
<div class="l" style="left:406px;top:216px;width:237px;height:1px;background:#000"></div>
<div class="l" style="left:406px;top:230px;width:237px;height:1px;background:#000"></div>
<div class="l" style="left:492px;top:192px;width:1px;height:11px;background:#000"></div>
<div class="l" style="left:592px;top:192px;width:1px;height:11px;background:#000"></div>
<div class="t s" style="top:185.21px;font-size:7.9px;left:224.00px;width:600px;text-align:center;transform:scale(1,1.06);transform-origin:center 6.69px;">SALES INFORMATION</div>
<div class="t s" style="top:195.21px;font-size:7.9px;left:149.00px;width:600px;text-align:center;transform:scale(1,1.06);transform-origin:center 6.69px;">DATE</div>
<div class="t s" style="top:195.21px;font-size:7.9px;left:242.00px;width:600px;text-align:center;transform:scale(1,1.06);transform-origin:center 6.69px;">AMOUNT</div>
<div class="t s" style="top:195.21px;font-size:7.9px;left:317.00px;width:600px;text-align:center;transform:scale(1,1.06);transform-origin:center 6.69px;">CODE</div>
<div class="t m" style="top:205.61px;font-size:12.25px;left:149.30px;width:600px;text-align:center;transform:scale(1,0.875);transform-origin:center 9.39px;">1/11/2007</div>
<div class="t m" style="top:205.61px;font-size:12.25px;left:-9.70px;width:600px;text-align:right;transform:scale(1,0.875);transform-origin:right 9.39px;">$23,000</div>
<div class="t m" style="top:219.61px;font-size:12.25px;left:149.30px;width:600px;text-align:center;transform:scale(1,0.875);transform-origin:center 9.39px;">9/28/2010</div>
<div class="t m" style="top:219.61px;font-size:12.25px;left:-9.70px;width:600px;text-align:right;transform:scale(1,0.875);transform-origin:right 9.39px;">$50,000</div>
<div class="t m" style="top:219.61px;font-size:12.25px;left:317.70px;width:600px;text-align:center;transform:scale(1,0.875);transform-origin:center 9.39px;">0</div>
<div class="f" style="left:407px;top:248px;width:235px;height:9px;background:#add8e6"></div>
<div class="f" style="left:407px;top:282px;width:235px;height:13px;background:#f8f8fe"></div>
<div class="f" style="left:407px;top:310px;width:235px;height:13px;background:#f8f8fe"></div>
<div class="l" style="left:406px;top:247px;width:237px;height:1px;background:#000"></div>
<div class="l" style="left:406px;top:323px;width:237px;height:1px;background:#000"></div>
<div class="l" style="left:406px;top:247px;width:1px;height:77px;background:#000"></div>
<div class="l" style="left:642px;top:247px;width:1px;height:77px;background:#000"></div>
<div class="l" style="left:406px;top:257px;width:237px;height:1px;background:#000"></div>
<div class="l" style="left:406px;top:267px;width:237px;height:1px;background:#000"></div>
<div class="l" style="left:406px;top:281px;width:237px;height:1px;background:#000"></div>
<div class="l" style="left:406px;top:295px;width:237px;height:1px;background:#000"></div>
<div class="l" style="left:406px;top:309px;width:237px;height:1px;background:#000"></div>
<div class="l" style="left:492px;top:257px;width:1px;height:11px;background:#000"></div>
<div class="l" style="left:542px;top:257px;width:1px;height:11px;background:#000"></div>
<div class="t s" style="top:250.21px;font-size:7.9px;left:224.00px;width:600px;text-align:center;transform:scale(1,1.06);transform-origin:center 6.69px;">LEGAL INSTRUMENTS</div>
<div class="t s" style="top:260.21px;font-size:7.9px;left:149.00px;width:600px;text-align:center;transform:scale(1,1.06);transform-origin:center 6.69px;">DATE</div>
<div class="t s" style="top:260.21px;font-size:7.9px;left:217.00px;width:600px;text-align:center;transform:scale(1,1.06);transform-origin:center 6.69px;">TYPE</div>
<div class="t s" style="top:260.21px;font-size:7.9px;left:292.00px;width:600px;text-align:center;transform:scale(1,1.06);transform-origin:center 6.69px;">BOOK PAGE</div>
<div class="t m" style="top:270.81px;font-size:12.25px;left:149.30px;width:600px;text-align:center;transform:scale(1,0.875);transform-origin:center 9.39px;">1/11/2007</div>
<div class="t m" style="top:270.81px;font-size:12.25px;left:217.20px;width:600px;text-align:center;transform:scale(1,0.875);transform-origin:center 9.39px;">D</div>
<div class="t m" style="top:270.81px;font-size:12.25px;left:16.60px;width:600px;text-align:right;transform:scale(1,0.875);transform-origin:right 9.39px;">257 227</div>
<div class="t m" style="top:285.01px;font-size:12.25px;left:149.30px;width:600px;text-align:center;transform:scale(1,0.875);transform-origin:center 9.39px;">9/28/2010</div>
<div class="t m" style="top:285.01px;font-size:12.25px;left:217.20px;width:600px;text-align:center;transform:scale(1,0.875);transform-origin:center 9.39px;">D</div>
<div class="t m" style="top:285.01px;font-size:12.25px;left:16.60px;width:600px;text-align:right;transform:scale(1,0.875);transform-origin:right 9.39px;">284 775</div>
<div class="t m" style="top:299.21px;font-size:12.25px;left:149.30px;width:600px;text-align:center;transform:scale(1,0.875);transform-origin:center 9.39px;">10/31/2018</div>
<div class="t m" style="top:299.21px;font-size:12.25px;left:217.20px;width:600px;text-align:center;transform:scale(1,0.875);transform-origin:center 9.39px;">W</div>
<div class="t m" style="top:299.21px;font-size:12.25px;left:16.60px;width:600px;text-align:right;transform:scale(1,0.875);transform-origin:right 9.39px;">2018 128</div>
<div class="f" style="left:407px;top:328px;width:235px;height:8px;background:#add8e6"></div>
<div class="f" style="left:407px;top:361px;width:235px;height:13px;background:#f8f8fe"></div>
<div class="f" style="left:407px;top:389px;width:235px;height:13px;background:#f8f8fe"></div>
<div class="l" style="left:406px;top:327px;width:237px;height:1px;background:#000"></div>
<div class="l" style="left:406px;top:402px;width:237px;height:1px;background:#000"></div>
<div class="l" style="left:406px;top:327px;width:1px;height:76px;background:#000"></div>
<div class="l" style="left:642px;top:327px;width:1px;height:76px;background:#000"></div>
<div class="l" style="left:406px;top:336px;width:237px;height:1px;background:#000"></div>
<div class="l" style="left:406px;top:346px;width:237px;height:1px;background:#000"></div>
<div class="l" style="left:406px;top:360px;width:237px;height:1px;background:#000"></div>
<div class="l" style="left:406px;top:374px;width:237px;height:1px;background:#000"></div>
<div class="l" style="left:406px;top:388px;width:237px;height:1px;background:#000"></div>
<div class="l" style="left:524px;top:327px;width:1px;height:90px;background:#000"></div>
<div class="l" style="left:642px;top:402px;width:1px;height:15px;background:#000"></div>
<div class="l" style="left:524px;top:416px;width:119px;height:1px;background:#000"></div>
<div class="l" style="left:481px;top:336px;width:1px;height:11px;background:#000"></div>
<div class="l" style="left:599px;top:336px;width:1px;height:11px;background:#000"></div>
<div class="l" style="left:599px;top:402px;width:1px;height:15px;background:#000"></div>
<div class="t s" style="top:329.41px;font-size:7.9px;left:165.00px;width:600px;text-align:center;transform:scale(1,1.06);transform-origin:center 6.69px;">PLUMBING</div>
<div class="t s" style="top:329.41px;font-size:7.9px;left:283.00px;width:600px;text-align:center;transform:scale(1,1.06);transform-origin:center 6.69px;">FIREPLACES</div>
<div class="t s" style="top:339.41px;font-size:7.9px;left:143.50px;width:600px;text-align:center;transform:scale(1,1.06);transform-origin:center 6.69px;">FIXTURE</div>
<div class="t s" style="top:339.41px;font-size:7.9px;left:202.50px;width:600px;text-align:center;transform:scale(1,1.06);transform-origin:center 6.69px;">COUNT</div>
<div class="t s" style="top:339.41px;font-size:7.9px;left:261.50px;width:600px;text-align:center;transform:scale(1,1.06);transform-origin:center 6.69px;">TYPE</div>
<div class="t s" style="top:339.41px;font-size:7.9px;left:320.50px;width:600px;text-align:center;transform:scale(1,1.06);transform-origin:center 6.69px;">COUNT</div>
<div class="t s" style="top:407.01px;font-size:7.9px;left:261.50px;width:600px;text-align:center;transform:scale(1,1.06);transform-origin:center 6.69px;">OPENINGS</div>
<div class="f" style="left:645px;top:593px;width:199px;height:9px;background:#add8e6"></div>
<div class="l" style="left:644px;top:592px;width:201px;height:1px;background:#000"></div>
<div class="l" style="left:644px;top:617px;width:201px;height:1px;background:#000"></div>
<div class="l" style="left:644px;top:592px;width:1px;height:26px;background:#000"></div>
<div class="l" style="left:844px;top:592px;width:1px;height:26px;background:#000"></div>
<div class="l" style="left:644px;top:602px;width:201px;height:1px;background:#000"></div>
<div class="l" style="left:744px;top:592px;width:1px;height:26px;background:#000"></div>
<div class="t s" style="top:595.01px;font-size:7.9px;left:394.00px;width:600px;text-align:center;transform:scale(1,1.06);transform-origin:center 6.69px;">PRINT DATE</div>
<div class="t s" style="top:595.01px;font-size:7.9px;left:494.00px;width:600px;text-align:center;transform:scale(1,1.06);transform-origin:center 6.69px;">LAST SAVED</div>
<div class="t m" style="top:604.81px;font-size:12.25px;left:394.00px;width:600px;text-align:center;transform:scale(1,0.875);transform-origin:center 9.39px;">10/26/2023</div>
<div class="t m" style="top:604.81px;font-size:12.25px;left:493.70px;width:600px;text-align:center;transform:scale(1,0.875);transform-origin:center 9.39px;">9/1/2023</div>
<div class="f" style="left:848px;top:593px;width:199px;height:9px;background:#add8e6"></div>
<div class="f" style="left:848px;top:617px;width:199px;height:13px;background:#f8f8fe"></div>
<div class="f" style="left:848px;top:645px;width:199px;height:13px;background:#f8f8fe"></div>
<div class="l" style="left:847px;top:592px;width:201px;height:1px;background:#000"></div>
<div class="l" style="left:847px;top:672px;width:201px;height:1px;background:#000"></div>
<div class="l" style="left:847px;top:592px;width:1px;height:81px;background:#000"></div>
<div class="l" style="left:1047px;top:592px;width:1px;height:81px;background:#000"></div>
<div class="l" style="left:847px;top:602px;width:201px;height:1px;background:#000"></div>
<div class="l" style="left:847px;top:616px;width:201px;height:1px;background:#000"></div>
<div class="l" style="left:847px;top:630px;width:201px;height:1px;background:#000"></div>
<div class="l" style="left:847px;top:644px;width:201px;height:1px;background:#000"></div>
<div class="l" style="left:847px;top:658px;width:201px;height:1px;background:#000"></div>
<div class="l" style="left:947px;top:629px;width:101px;height:3px;background:#000"></div>
<div class="l" style="left:947px;top:657px;width:101px;height:3px;background:#000"></div>
<div class="l" style="left:946px;top:602px;width:2px;height:71px;background:#000"></div>
<div class="t s" style="top:595.01px;font-size:7.9px;left:647.00px;width:600px;text-align:center;transform:scale(1,1.06);transform-origin:center 6.69px;">BUILDING VALUE SUMMARY</div>
<div class="t m" style="top:605.92px;font-size:9.5px;left:848.60px;font-weight:bold;transform:scale(1,0.96);transform-origin:left 7.28px;-webkit-text-stroke:0;">RPCN</div>
<div class="t m" style="top:605.01px;font-size:12.25px;left:444.00px;width:600px;text-align:right;transform:scale(1,0.875);transform-origin:right 9.39px;">$0</div>
<div class="t m" style="top:619.92px;font-size:9.5px;left:848.60px;font-weight:bold;transform:scale(1,0.96);transform-origin:left 7.28px;-webkit-text-stroke:0;">DEP</div>
<div class="t m" style="top:619.01px;font-size:12.25px;left:444.00px;width:600px;text-align:right;transform:scale(1,0.875);transform-origin:right 9.39px;">$0</div>
<div class="t m" style="top:618.21px;font-size:12.25px;left:949.00px;transform:scale(1.45,0.875);transform-origin:left 9.39px;">-</div>
<div class="t m" style="top:633.92px;font-size:9.5px;left:848.60px;font-weight:bold;transform:scale(1,0.96);transform-origin:left 7.28px;-webkit-text-stroke:0;">RCLND</div>
<div class="t m" style="top:633.01px;font-size:12.25px;left:444.00px;width:600px;text-align:right;transform:scale(1,0.875);transform-origin:right 9.39px;">$0</div>
<div class="t m" style="top:647.92px;font-size:9.5px;left:848.60px;font-weight:bold;transform:scale(1,0.96);transform-origin:left 7.28px;-webkit-text-stroke:0;">OBS F/E</div>
<div class="t m" style="top:647.01px;font-size:12.25px;left:444.00px;width:600px;text-align:right;transform:scale(1,0.875);transform-origin:right 9.39px;">$0</div>
<div class="t m" style="top:646.21px;font-size:12.25px;left:949.00px;transform:scale(1.45,0.875);transform-origin:left 9.39px;">-</div>
<div class="t m" style="top:661.92px;font-size:9.5px;left:848.60px;font-weight:bold;transform:scale(1,0.96);transform-origin:left 7.28px;-webkit-text-stroke:0;">LCF</div>
<div class="t m" style="top:661.01px;font-size:12.25px;left:444.00px;width:600px;text-align:right;transform:scale(1,0.875);transform-origin:right 9.39px;">$0</div>
<div class="t m" style="top:661.01px;font-size:12.25px;left:343.80px;width:600px;text-align:right;transform:scale(1,0.875);transform-origin:right 9.39px;">100%</div>
<div class="f" style="left:848px;top:682px;width:199px;height:19px;background:#ffff00"></div>
<div class="f" style="left:848px;top:716px;width:199px;height:13px;background:#f8f8fe"></div>
<div class="f" style="left:848px;top:744px;width:199px;height:13px;background:#f8f8fe"></div>
<div class="f" style="left:903px;top:773px;width:144px;height:26px;background:#ffff00"></div>
<div class="l" style="left:847px;top:681px;width:201px;height:1px;background:#000"></div>
<div class="l" style="left:847px;top:799px;width:201px;height:1px;background:#000"></div>
<div class="l" style="left:847px;top:681px;width:1px;height:119px;background:#000"></div>
<div class="l" style="left:1047px;top:681px;width:1px;height:119px;background:#000"></div>
<div class="l" style="left:847px;top:701px;width:201px;height:1px;background:#000"></div>
<div class="l" style="left:847px;top:715px;width:201px;height:1px;background:#000"></div>
<div class="l" style="left:847px;top:729px;width:201px;height:1px;background:#000"></div>
<div class="l" style="left:847px;top:743px;width:201px;height:1px;background:#000"></div>
<div class="l" style="left:847px;top:757px;width:201px;height:1px;background:#000"></div>
<div class="l" style="left:847px;top:771px;width:201px;height:1px;background:#000"></div>
<div class="l" style="left:947px;top:742px;width:101px;height:3px;background:#000"></div>
<div class="l" style="left:902px;top:771px;width:146px;height:3px;background:#000"></div>
<div class="l" style="left:946px;top:701px;width:2px;height:71px;background:#000"></div>
<div class="l" style="left:902px;top:772px;width:1px;height:28px;background:#000"></div>
<div class="t m" style="top:683.95px;font-size:13.9px;left:646.70px;width:600px;text-align:center;font-weight:bold;transform:scale(1,0.83);transform-origin:center 10.65px;-webkit-text-stroke:0;">PARCEL SUMMARY</div>
<div class="t m" style="top:703.72px;font-size:9.5px;left:848.60px;font-weight:bold;transform:scale(1,0.96);transform-origin:left 7.28px;-webkit-text-stroke:0;">TOTAL BLDG VALUE</div>
<div class="t m" style="top:703.61px;font-size:12.25px;left:444.00px;width:600px;text-align:right;transform:scale(1,0.875);transform-origin:right 9.39px;">$0</div>
<div class="t m" style="top:717.72px;font-size:9.5px;left:848.60px;font-weight:bold;transform:scale(1,0.96);transform-origin:left 7.28px;-webkit-text-stroke:0;">OBLDG VALUE</div>
<div class="t m" style="top:717.61px;font-size:12.25px;left:444.00px;width:600px;text-align:right;transform:scale(1,0.875);transform-origin:right 9.39px;">$6,662</div>
<div class="t m" style="top:717.61px;font-size:12.25px;left:948.40px;transform:scale(1.2,1.1);transform-origin:left 9.39px;">+</div>
<div class="t m" style="top:731.72px;font-size:9.5px;left:848.60px;font-weight:bold;transform:scale(1,0.96);transform-origin:left 7.28px;-webkit-text-stroke:0;">LAND VALUE</div>
<div class="t m" style="top:731.61px;font-size:12.25px;left:444.00px;width:600px;text-align:right;transform:scale(1,0.875);transform-origin:right 9.39px;">$20,177</div>
<div class="t m" style="top:731.61px;font-size:12.25px;left:948.40px;transform:scale(1.2,1.1);transform-origin:left 9.39px;">+</div>
<div class="t m" style="top:745.72px;font-size:9.5px;left:848.60px;font-weight:bold;transform:scale(1,0.96);transform-origin:left 7.28px;-webkit-text-stroke:0;">APPRAISED VALUE</div>
<div class="t m" style="top:745.61px;font-size:12.25px;left:444.00px;width:600px;text-align:right;transform:scale(1,0.875);transform-origin:right 9.39px;">$26,838</div>
<div class="t m" style="top:759.72px;font-size:9.5px;left:848.60px;font-weight:bold;transform:scale(1,0.96);transform-origin:left 7.28px;-webkit-text-stroke:0;">DEFERRED VALUE</div>
<div class="t m" style="top:759.61px;font-size:12.25px;left:444.00px;width:600px;text-align:right;transform:scale(1,0.875);transform-origin:right 9.39px;">$0</div>
<div class="t m" style="top:758.61px;font-size:12.25px;left:948.40px;transform:scale(1.45,0.875);transform-origin:left 9.39px;">-</div>
<div class="t m" style="top:774.72px;font-size:9.5px;left:573.60px;width:600px;text-align:center;font-weight:bold;transform:scale(1,0.96);transform-origin:center 7.28px;-webkit-text-stroke:0;">TAXABLE</div>
<div class="t m" style="top:784.72px;font-size:9.5px;left:573.60px;width:600px;text-align:center;font-weight:bold;transform:scale(1,0.96);transform-origin:center 7.28px;-webkit-text-stroke:0;">VALUE</div>
<div class="t s" style="top:774.45px;font-size:20.5px;left:444.30px;width:600px;text-align:right;font-weight:bold;color:#e01010;transform:scale(0.945,1);transform-origin:right 17.35px;-webkit-text-stroke:0;">$26,838</div>
</div></body></html>
